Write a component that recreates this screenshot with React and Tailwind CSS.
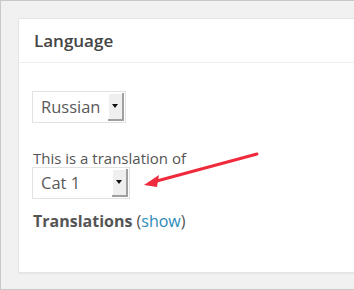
const font = { fontFamily: '"Open Sans", "Noto Sans", sans-serif' };

function SelectBox({ label, width }) {
    return (
        <div
            className="flex h-[32px] items-stretch border border-[#e2e2e2] bg-white p-px"
            style={{ width }}
        >
            <div className="flex flex-1 items-center pl-[7px] text-[16.5px] text-[#5a5a5a]">
                {label}
            </div>
            <div className="flex w-[16px] items-center justify-center border-b-2 border-r-2 border-[#a0a0a0] bg-[#efefef] shadow-[inset_1px_1px_0_#fff]">
                <svg width="6" height="4" viewBox="0 0 6 4">
                    <polygon points="0,0 6,0 3,4" fill="#111" />
                </svg>
            </div>
        </div>
    );
}

export default function App() {
    return (
        <div
            className="relative h-[290px] w-[354px] overflow-hidden border-y border-l border-[#c8c8c8] bg-[#f1f1f1] pl-[17px] pt-[17px]"
            style={font}
        >
            <div className="h-[255px] w-[360px] border border-[#e5e5e5] bg-white shadow-[0_1px_1px_rgba(0,0,0,0.04)]">
                {/* header */}
                <div className="flex h-[44px] items-center border-b border-[#eeeeee] pl-[15px] text-[17px] font-semibold text-[#444]">
                    Language
                </div>

                {/* body */}
                <div className="px-[13px] pt-[28px]">
                    <SelectBox label="Russian" width={94} />
                    <div className="mt-[26px] pl-px text-[15px] leading-[18px] text-[#555]">
                        This is a translation of
                    </div>
                    <SelectBox label="Cat 1" width={98} />
                    <div className="mt-[11px] pl-px text-[16px] leading-[22px] text-[#555]">
                        <span className="font-bold">Translations</span>{" "}
                        (<span className="text-[#2b8ab8]">show</span>)
                    </div>
                </div>
            </div>

            {/* annotation arrow */}
            <svg
                className="absolute left-0 top-0"
                width="354"
                height="290"
                viewBox="0 0 354 290"
            >
                <line x1="256" y1="153" x2="152" y2="181" stroke="#ee2a3c" strokeWidth="3" strokeLinecap="round" />
                <polygon points="143,184 158,174 156,186" fill="#ee2a3c" />
            </svg>
        </div>
    );
}
